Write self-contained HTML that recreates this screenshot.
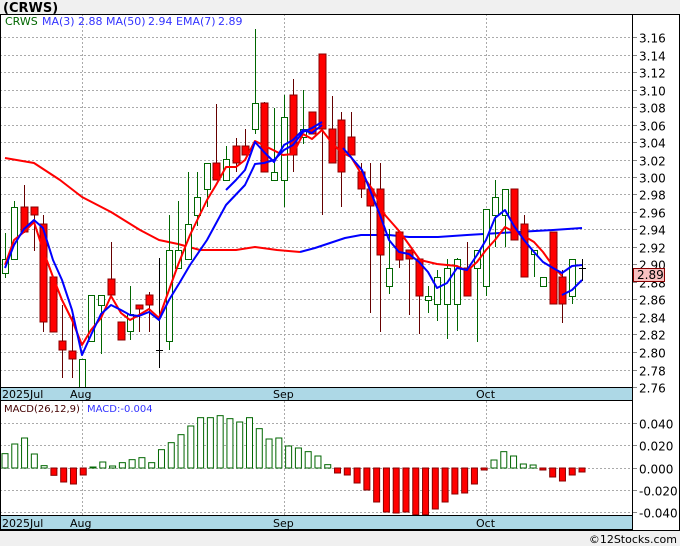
<!DOCTYPE html><html><head><meta charset="utf-8"><style>
body{margin:0;width:680px;height:546px;background:#f0f0f0;overflow:hidden;font-family:"DejaVu Sans","Liberation Sans",sans-serif}
svg{position:absolute;left:0;top:0}
</style></head><body>
<svg id="s" width="680" height="546" xmlns="http://www.w3.org/2000/svg" font-family="DejaVu Sans, Liberation Sans, sans-serif"></svg>
<script>
var s='';
function R(x,y,w,h,f,st){s+='<rect x="'+x+'" y="'+y+'" width="'+w+'" height="'+h+'" fill="'+f+'"'+(st?' stroke="'+st+'" stroke-width="1"':'')+'/>';}
function L(x1,y1,x2,y2,c,w,d){s+='<line x1="'+x1+'" y1="'+y1+'" x2="'+x2+'" y2="'+y2+'" stroke="'+c+'" stroke-width="'+(w||1)+'"'+(d?' stroke-dasharray="'+d+'"':'')+'/>';}
function T(x,y,t,c,sz,a,b){s+='<text x="'+x+'" y="'+y+'" fill="'+c+'" font-size="'+sz+'"'+(a?' text-anchor="'+a+'"':'')+(b?' font-weight="bold"':'')+'>'+t+'</text>';}
function P(pts,c,w){s+='<polyline points="'+pts+'" fill="none" stroke="'+c+'" stroke-width="'+(w||2)+'" stroke-linejoin="round"/>';}
R(0,0,680,546,'#f0f0f0');
T(3,12,'(CRWS)','#000',13,0,1);
R(0,14,680,517,'#fff');
for(var i=0;i<=20;i++){var p=2.76+i*0.02,y=387-875*(p-2.76);y=Math.round(y)+0.5;L(0,y,632,y,'#aaa',1,'2,2');L(632,y,637,y,'#888');T(639,y+5,p.toFixed(2),'#000',12);}
[82,284,486].forEach(function(x){L(x+.5,14,x+.5,387,'#aaa',1,'2,2');L(x+.5,401,x+.5,515,'#aaa',1,'2,2');});
[[0.04,423],[0.02,445],[0,468],[-0.02,490],[-0.04,512]].forEach(function(a){var y=a[1]+.5;L(0,y,632,y,'#aaa',1,'2,2');L(632,y,637,y,'#888');T(639,y+5,a[0].toFixed(3),'#000',12);});
P('5,158 34,163 60,180 82,197 111,212 140,230 159,240 178,244 200,250 236,250 255,247 277,250 300,252','#f00',2);
P('300,252 315,248 330,243 345,238 361,235 389,235 409,237 438,237 467,235 500,233 553,230 582,228','#00f',2);
var C=[[5,259,273,233,278,'g'],[14,207,259,201,259,'g'],[24,207,232,185,233,'r'],[34,207,215,207,251,'r'],[43,224,322,215,332,'r'],[53,277,332,277,332,'r'],[62,341,350,305,378,'r'],[72,351,359,316,378,'r'],[82,359,387,359,392,'g'],[91,295,341,295,341,'g'],[101,295,305,295,354,'g'],[111,279,295,242,295,'r'],[121,322,340,322,340,'r'],[130,314,331,286,340,'g'],[139,305,309,305,332,'r'],[149,295,305,292,332,'r'],[159,350,350,258,368,'k'],[169,250,341,215,350,'g'],[178,250,268,201,268,'g'],[188,224,259,172,259,'g'],[197,197,215,172,226,'g'],[207,163,189,163,207,'g'],[216,163,180,104,180,'r'],[226,159,180,146,180,'g'],[236,146,163,138,172,'r'],[245,146,155,129,155,'r'],[255,103,129,29,134,'g'],[264,103,172,102,172,'r'],[274,172,180,108,180,'g'],[284,117,180,95,207,'g'],[293,95,155,79,172,'r'],[303,129,137,90,144,'g'],[312,112,134,112,134,'r'],[322,54,129,54,215,'r'],[332,129,163,96,163,'r'],[341,120,172,112,207,'r'],[351,137,155,112,155,'r'],[361,172,189,163,198,'r'],[370,189,206,163,313,'r'],[380,189,255,163,332,'r'],[389,268,286,229,294,'g'],[399,232,260,232,268,'r'],[409,250,259,250,315,'r'],[419,259,296,259,334,'r'],[428,296,300,286,313,'g'],[437,277,304,270,321,'g'],[447,268,304,259,339,'g'],[457,259,304,258,331,'g'],[467,268,296,242,296,'r'],[477,250,268,250,342,'g'],[486,209,286,209,296,'g'],[495,197,215,180,247,'g'],[505,189,215,189,247,'g'],[514,189,240,189,240,'r'],[524,224,277,215,277,'r'],[534,250,254,250,277,'g'],[543,277,286,277,286,'g'],[553,232,304,232,304,'r'],[562,277,304,270,323,'r'],[572,259,296,259,304,'g'],[582,268,268,259,281,'k']];
C.forEach(function(c){var x=c[0];if(c[5]=='g'){L(x+.5,c[3],x+.5,c[4],'#060',1);R(x-2.5,c[1]+.5,6,Math.max(c[2]-c[1],2),'#fff','#060');}
else if(c[5]=='r'){L(x+.5,c[3],x+.5,c[4],'#600',1);R(x-3,c[1],7,Math.max(c[2]-c[1],2),'#f00','#800');}
else{L(x+.5,c[3],x+.5,c[4],'#000',1);L(x-3,c[1]+.5,x+4,c[1]+.5,'#000',1);}});
P('5,265 14,240 24,232 34,222 43,250 53,277 62,300 72,320 82,345 91,330 101,318 111,296 121,313 130,320 139,315 149,309 159,318 169,290 178,265 190,235 207,200 216,185 226,167 236,167 245,160 255,141 273,150 283,155 293,154 303,134 312,139 322,130 332,143 341,152 351,157 362,175 373,190 385,215 400,232 410,246 420,260 437,264 457,266 467,271 477,262 486,250 495,240 505,227 514,232 524,236 534,242 543,252 553,266 562,276','#f00',2);
P('5,268 14,245 24,229 34,220 43,228 53,260 62,280 72,310 82,355 91,335 101,314 111,305 121,310 130,315 139,316 149,312 159,320 169,300 180,282 190,265 207,240 226,205 245,185 255,164 264,163 274,160 284,150 293,145 303,132 312,128 322,122','#00f',2);
P('226,190 236,180 245,170 255,142 264,152 274,162 284,145 293,140 303,130 312,133 322,125','#00f',2);
P('343,148 362,170 380,215 389,240 399,252 409,254 419,262 428,272 437,288 447,283 457,268 467,270 477,255 486,240 495,218 505,210 514,226 524,240 534,252 543,262 553,268 562,273 572,266 582,265','#00f',2);
P('562,295 572,290 582,280','#00f',2);
T(5,25,'CRWS','#060',11);T(42,25,'MA(3)','#33f',11);T(78,25,'2.88','#33f',11);T(106,25,'MA(50)','#33f',11);T(148,25,'2.94','#33f',11);T(176,25,'EMA(7)','#33f',11);T(218,25,'2.89','#33f',11);
R(633.5,268.5,31,13,'#f8c0c0','#800');T(637,279,'2.89','#000',12);
var M=[43,72,90,42,7,-22,-42,-48,-21,3,18,6,16,25,31,16,55,76,100,126,151,151,157,148,138,151,118,87,90,66,60,49,36,10,-15,-21,-45,-66,-102,-132,-135,-132,-140,-140,-123,-102,-78,-75,-48,-6,24,49,36,12,9,-6,-27,-39,-21,-12];
M.forEach(function(v,i){var x=5+9.78*i,h=v/3;if(v>0)R(x-3,468-h,6,h,'#fff','#060');else R(x-3,468,6,-h,'#f00','#800');});
T(4,412,'MACD(26,12,9)','#400',10);T(87,412,'MACD:-0.004','#33f',10);
R(0.5,387.5,632,13,'#add8e6','#000');R(0.5,515.5,632,14,'#add8e6','#000');
[[387,398],[515,527]].forEach(function(b){T(2,b[1],'2025Jul','#000',11);T(70,b[1],'Aug','#000',11);T(273,b[1],'Sep','#000',11);T(476,b[1],'Oct','#000',11);});
L(0,14.5,680,14.5,'#000');L(632.5,14,632.5,530,'#000');L(0.5,14,0.5,530,'#000');L(679.5,14,679.5,530,'#000');L(0,530.5,680,530.5,'#000');
T(677,543,'©12Stocks.com','#000',11,'end');
document.getElementById('s').innerHTML=s;
</script></body></html>
